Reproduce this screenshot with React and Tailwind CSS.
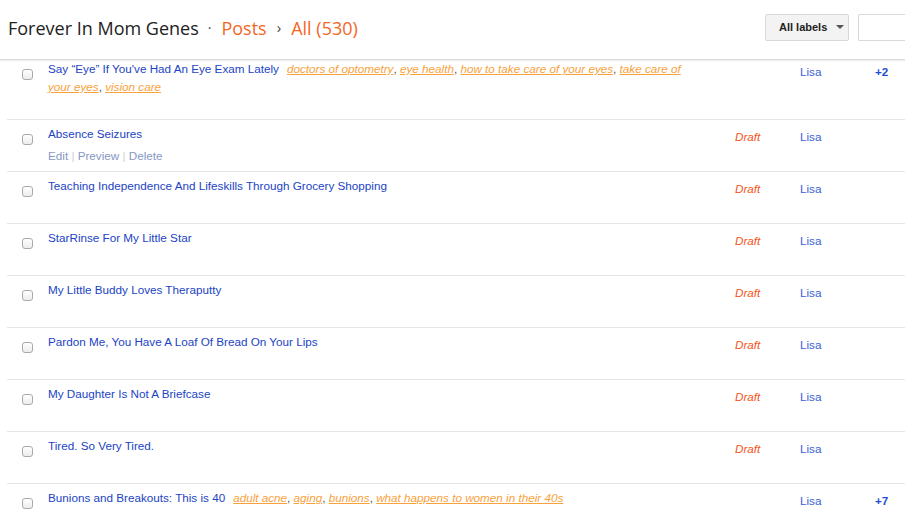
import React from "react";

const posts = [
  {
    title: "Say \u201cEye\u201d If You've Had An Eye Exam Lately",
    labels: ["doctors of optometry", "eye health", "how to take care of your eyes", "take care of your eyes", "vision care"],
    author: "Lisa",
    more: "+2",
    first: true,
  },
  { title: "Absence Seizures", draft: true, author: "Lisa", actions: true },
  { title: "Teaching Independence And Lifeskills Through Grocery Shopping", draft: true, author: "Lisa" },
  { title: "StarRinse For My Little Star", draft: true, author: "Lisa" },
  { title: "My Little Buddy Loves Theraputty", draft: true, author: "Lisa" },
  { title: "Pardon Me, You Have A Loaf Of Bread On Your Lips", draft: true, author: "Lisa" },
  { title: "My Daughter Is Not A Briefcase", draft: true, author: "Lisa" },
  { title: "Tired. So Very Tired.", draft: true, author: "Lisa" },
  {
    title: "Bunions and Breakouts: This is 40",
    labels: ["adult acne", "aging", "bunions", "what happens to women in their 40s"],
    author: "Lisa",
    more: "+7",
  },
];

function Checkbox() {
  return (
    <span className="block w-[11px] h-[11px] rounded-[3px] border border-[#a9a9a9] bg-gradient-to-b from-white to-[#ececec] shadow-[inset_0_1px_0_#fff]" />
  );
}

function PostRow({ post }) {
  return (
    <div
      className={`flex ml-[7px] border-b border-[#e5e5e5] box-border ${
        post.first ? "h-[60px] pt-0" : "h-[52px] pt-[5px]"
      }`}
    >
      <div className={`w-[41px] pl-[15px] ${post.first ? "pt-[9px]" : "pt-[9px]"}`}>
        <Checkbox />
      </div>
      <div className="w-[687px] pr-[50px] leading-[18px]">
        <div>
          <span className="text-[#1c44c4] mr-[8px]">{post.title}</span>
          {post.labels &&
            post.labels.map((l, i) => (
              <span key={l}>
                <span className="italic underline text-[#f9a13b] decoration-[#f9a13b]">{l}</span>
                {i < post.labels.length - 1 && <span className="text-[#555]">, </span>}
              </span>
            ))}
        </div>
        {post.actions && (
          <div className="mt-[4px] text-[#8797c5]">
            Edit <span className="text-[#d0d0d0]">|</span> Preview{" "}
            <span className="text-[#d0d0d0]">|</span> Delete
          </div>
        )}
      </div>
      <div className="w-[65px] leading-[18px] pt-[3px]">
        {post.draft && <span className="italic text-[#f4541c]">Draft</span>}
      </div>
      <div className={`w-[75px] leading-[18px] ${post.first ? "pt-[3px]" : "pt-[3px]"}`}>
        <span className="text-[#3b63d6]">{post.author}</span>
      </div>
      <div className="flex-1 leading-[18px] pt-[3px]">
        {post.more && <span className="font-bold text-[#1f4fd0]">{post.more}</span>}
      </div>
    </div>
  );
}

export default function App() {
  return (
    <div
      className="w-[905px] h-[529px] overflow-hidden bg-white text-[11.7px]"
      style={{ fontFamily: "'Liberation Sans', Arial, sans-serif" }}
    >
      {/* header */}
      <header className="relative z-10 h-[60px] box-border border-b border-[#d9d9d9] shadow-[0_1px_2px_rgba(0,0,0,0.08)] bg-white flex items-center pl-[8px]">
        <div className="flex items-center text-[18px] leading-none pb-[4px] font-['Open_Sans',sans-serif]">
          <span className="text-[#222]">Forever In Mom Genes</span>
          <span className="text-[#444] ml-[9px] mr-[10px] text-[14px]">·</span>
          <span className="text-[#f4671f]">Posts</span>
          <span className="text-[#444] mx-[10px] text-[15px]">›</span>
          <span className="text-[#f4671f]">All (530)</span>
        </div>
        <div className="ml-auto flex items-center pb-[5px] mr-[-13px] shrink-0">
          <button className="h-[27px] w-[84px] rounded-[2px] border border-[#d8d8d8] bg-[#f3f3f3] flex items-center pl-[13px] text-[11px] font-bold text-[#222]">
            All labels
            <span className="ml-[9px] w-0 h-0 border-l-[4px] border-r-[4px] border-t-[4px] border-l-transparent border-r-transparent border-t-[#555]" />
          </button>
          <div className="ml-[9px] h-[27px] w-[60px] border border-[#d9d9d9] bg-white rounded-[1px]" />
        </div>
      </header>

      {/* list */}
      <div>
        {posts.map((p) => (
          <PostRow key={p.title} post={p} />
        ))}
      </div>
    </div>
  );
}
